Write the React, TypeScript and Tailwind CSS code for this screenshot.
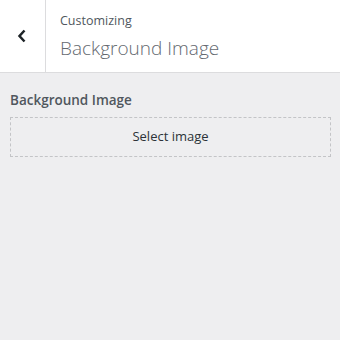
export default function App() {
  return (
    <div className="w-[340px] h-[340px] bg-[#eeeef0] font-['Open_Sans','Noto_Sans',sans-serif] overflow-hidden">
      {/* header */}
      <div className="flex h-[73px] bg-white border-b border-[#dcdcde]">
        <div className="w-[46px] shrink-0 border-r border-[#dcdcde] flex items-center justify-center">
          <svg width="10" height="14" viewBox="0 0 10 14" className="ml-[-2px] mt-[-1px]">
            <path d="M7.5 1.5 L2.5 7 L7.5 12.5" fill="none" stroke="#1d2327" strokeWidth="2.5" />
          </svg>
        </div>
        <div className="pl-[14px] pt-[12px]">
          <div className="text-[12.5px] leading-[18px] text-[#50575e]">Customizing</div>
          <div className="text-[19px] leading-[26px] mt-[5px] font-light text-[#646970]">Background Image</div>
        </div>
      </div>

      {/* control */}
      <div className="pl-[10px] pr-[9px] pt-[17px]">
        <div className="text-[13.5px] leading-[20px] font-semibold text-[#50575e]">Background Image</div>
        <button className="mt-[7px] w-full h-[40px] border border-dashed border-[#c3c4c7] text-[13px] text-[#2c3338] flex items-center justify-center">
          Select image
        </button>
      </div>
    </div>
  );
}
